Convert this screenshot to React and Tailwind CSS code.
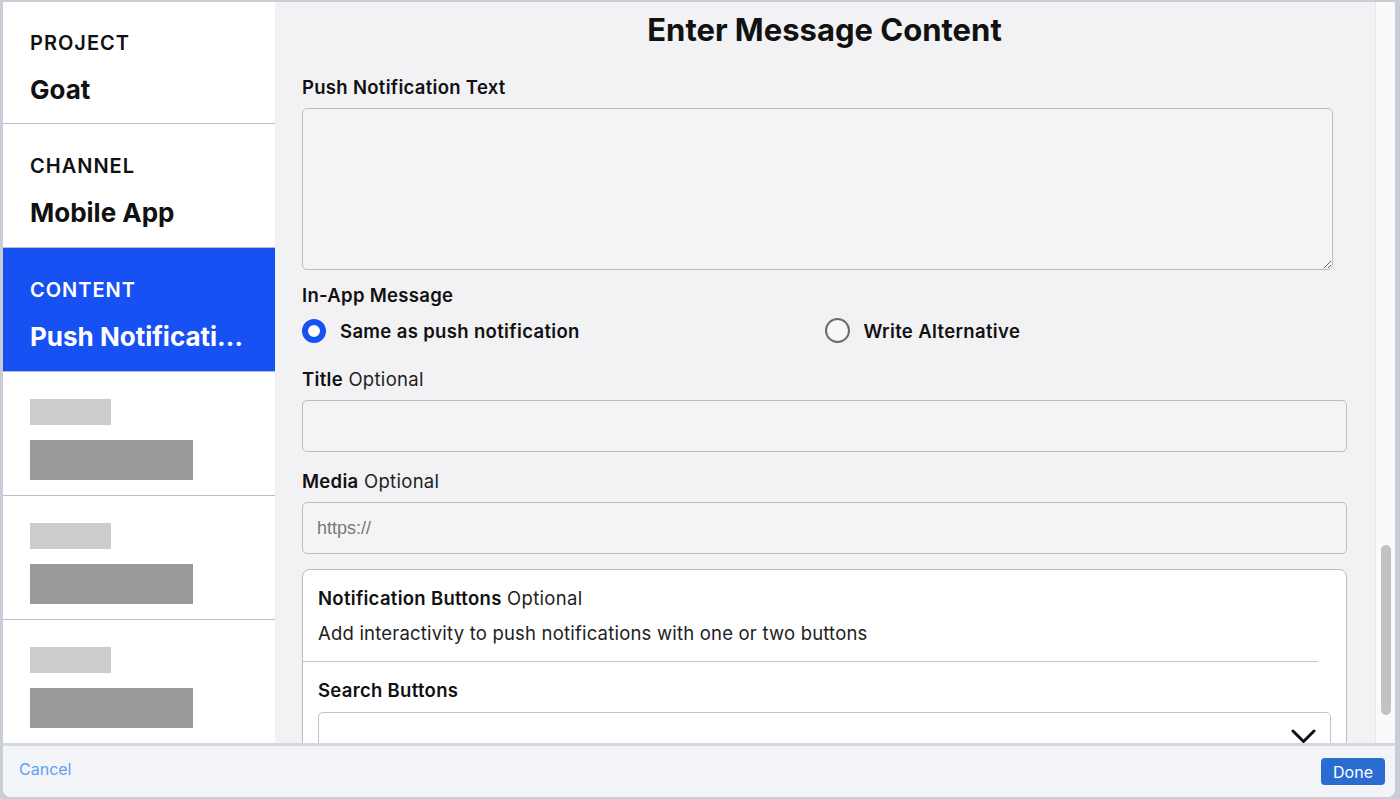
import React from "react";

const font = { fontFamily: "Inter, 'Noto Sans', sans-serif" };

const SideItem = ({ label, value, active, first }) => (
  <div
    className={`${first ? "h-[122px]" : "h-[124px]"} border-b border-[#b9bdc6] pl-[27px] ${
      active ? "bg-[#1751f4] text-white" : "bg-white text-[#111]"
    }`}
  >
    <div className={`${first ? "pt-[29px]" : "pt-[30px]"} text-[20px] leading-[24px] font-semibold tracking-[1px]`}>
      {label}
    </div>
    <div className="mt-[19px] text-[26px] leading-[32px] font-bold truncate pr-[30px]">{value}</div>
  </div>
);

const Placeholder = ({ last }) => (
  <div className={`${last ? "h-[124px]" : "h-[124px] border-b border-[#b9bdc6]"} bg-white pl-[27px] pt-[27px]`}>
    <div className="w-[81px] h-[26px] bg-[#cccccc]" />
    <div className="mt-[15px] w-[163px] h-[40px] bg-[#999999]" />
  </div>
);

const Label = ({ bold, rest }) => (
  <div className="text-[18.5px] leading-[24px] text-[#111] tracking-[0.3px]">
    <span className="font-semibold">{bold}</span>
    {rest && <span className="font-normal text-[#222]"> {rest}</span>}
  </div>
);

export default function App() {
  return (
    <div className="w-[1400px] h-[799px] bg-[#c9cdd5] pt-[2px] pl-[3px] pr-[5px] pb-[2px]" style={font}>
      <div className="w-full h-full flex flex-col bg-white rounded-b-[8px] overflow-hidden">
        <div className="flex flex-1 min-h-0">
          {/* Sidebar */}
          <div className="w-[272px] shrink-0 bg-white">
            <SideItem first label="PROJECT" value="Goat" />
            <SideItem label="CHANNEL" value="Mobile App" />
            <SideItem active label="CONTENT" value="Push Notifications" />
            <Placeholder />
            <Placeholder />
            <Placeholder last />
          </div>

          {/* Main */}
          <div className="flex-1 min-w-0 bg-[#f2f2f4] overflow-hidden pl-[27px] pr-[28px]">
            <h1 className="pt-[10px] text-center text-[31px] leading-[36px] font-bold text-[#111]">
              Enter Message Content
            </h1>

            <div className="mt-[27px]">
              <Label bold="Push Notification Text" />
            </div>
            <textarea className="mt-[9px] block w-[1031px] h-[162px] rounded-[5px] border border-[#bdbdc0] bg-[#f4f4f5] resize-y" />

            <div className="mt-[13px]">
              <Label bold="In-App Message" />
            </div>
            <div className="mt-[11px] grid grid-cols-2">
              <div className="flex items-center gap-[14px]">
                <span className="w-[24px] h-[24px] rounded-full border-[6px] border-[#1751f4] bg-white" />
                <span className="text-[18.5px] leading-[24px] font-semibold tracking-[0.35px] text-[#111]">
                  Same as push notification
                </span>
              </div>
              <div className="flex items-center gap-[14px]">
                <span className="w-[25px] h-[25px] rounded-full border-[2.5px] border-[#6a6a6d] bg-[#f7f7f8]" />
                <span className="text-[18.5px] leading-[24px] font-semibold tracking-[0.35px] text-[#111]">
                  Write Alternative
                </span>
              </div>
            </div>

            <div className="mt-[24px]">
              <Label bold="Title" rest="Optional" />
            </div>
            <div className="mt-[9px] h-[52px] rounded-[5px] border border-[#bdbdc0] bg-[#f4f4f5]" />

            <div className="mt-[17px]">
              <Label bold="Media" rest="Optional" />
            </div>
            <div
              className="mt-[9px] h-[52px] rounded-[5px] border border-[#bdbdc0] bg-[#f4f4f5] flex items-center pl-[14px] text-[18px] text-[#777]"
              style={{ fontFamily: "'Liberation Sans', Arial, sans-serif" }}
            >
              https://
            </div>

            <div className="mt-[15px] rounded-[8px] border border-[#bdbdc0] bg-white">
              <div className="mr-[28px] border-b border-[#c4c4c6] pl-[15px] pt-[16px] pb-[16px]">
                <Label bold="Notification Buttons" rest="Optional" />
                <div className="mt-[11px] text-[18.5px] leading-[24px] tracking-[0.2px] text-[#222]">
                  Add interactivity to push notifications with one or two buttons
                </div>
              </div>
              <div className="px-[15px] pt-[16px]">
                <Label bold="Search Buttons" />
                <div className="mt-[10px] h-[52px] rounded-[5px] border border-[#c4c4c6] bg-white flex items-start justify-end pt-[16px] pr-[14px]">
                  <svg width="25" height="15" viewBox="0 0 25 15" fill="none">
                    <path d="M2 2 L12.5 12.5 L23 2" stroke="#111" strokeWidth="3" strokeLinecap="round" strokeLinejoin="round" />
                  </svg>
                </div>
              </div>
            </div>
          </div>

          {/* Scrollbar */}
          <div className="w-[20px] shrink-0 bg-[#fafafa] border-l border-[#e6e6e8] pt-[543px] flex justify-center">
            <div className="w-[10px] h-[170px] rounded-full bg-[#c2c2c4]" />
          </div>
        </div>

        {/* Footer */}
        <div className="h-[54px] shrink-0 border-t-[3px] border-[#d4d8e0] bg-[#f3f4f8] flex items-start justify-between pt-[12px] pl-[16px] pr-[10px]">
          <span className="mt-[1px] text-[16px] leading-[20px] text-[#5ea1f0]">Cancel</span>
          <button className="w-[64px] h-[27px] rounded-[4px] bg-[#2a6ccf] text-white text-[16px] leading-none">
            Done
          </button>
        </div>
      </div>
    </div>
  );
}
